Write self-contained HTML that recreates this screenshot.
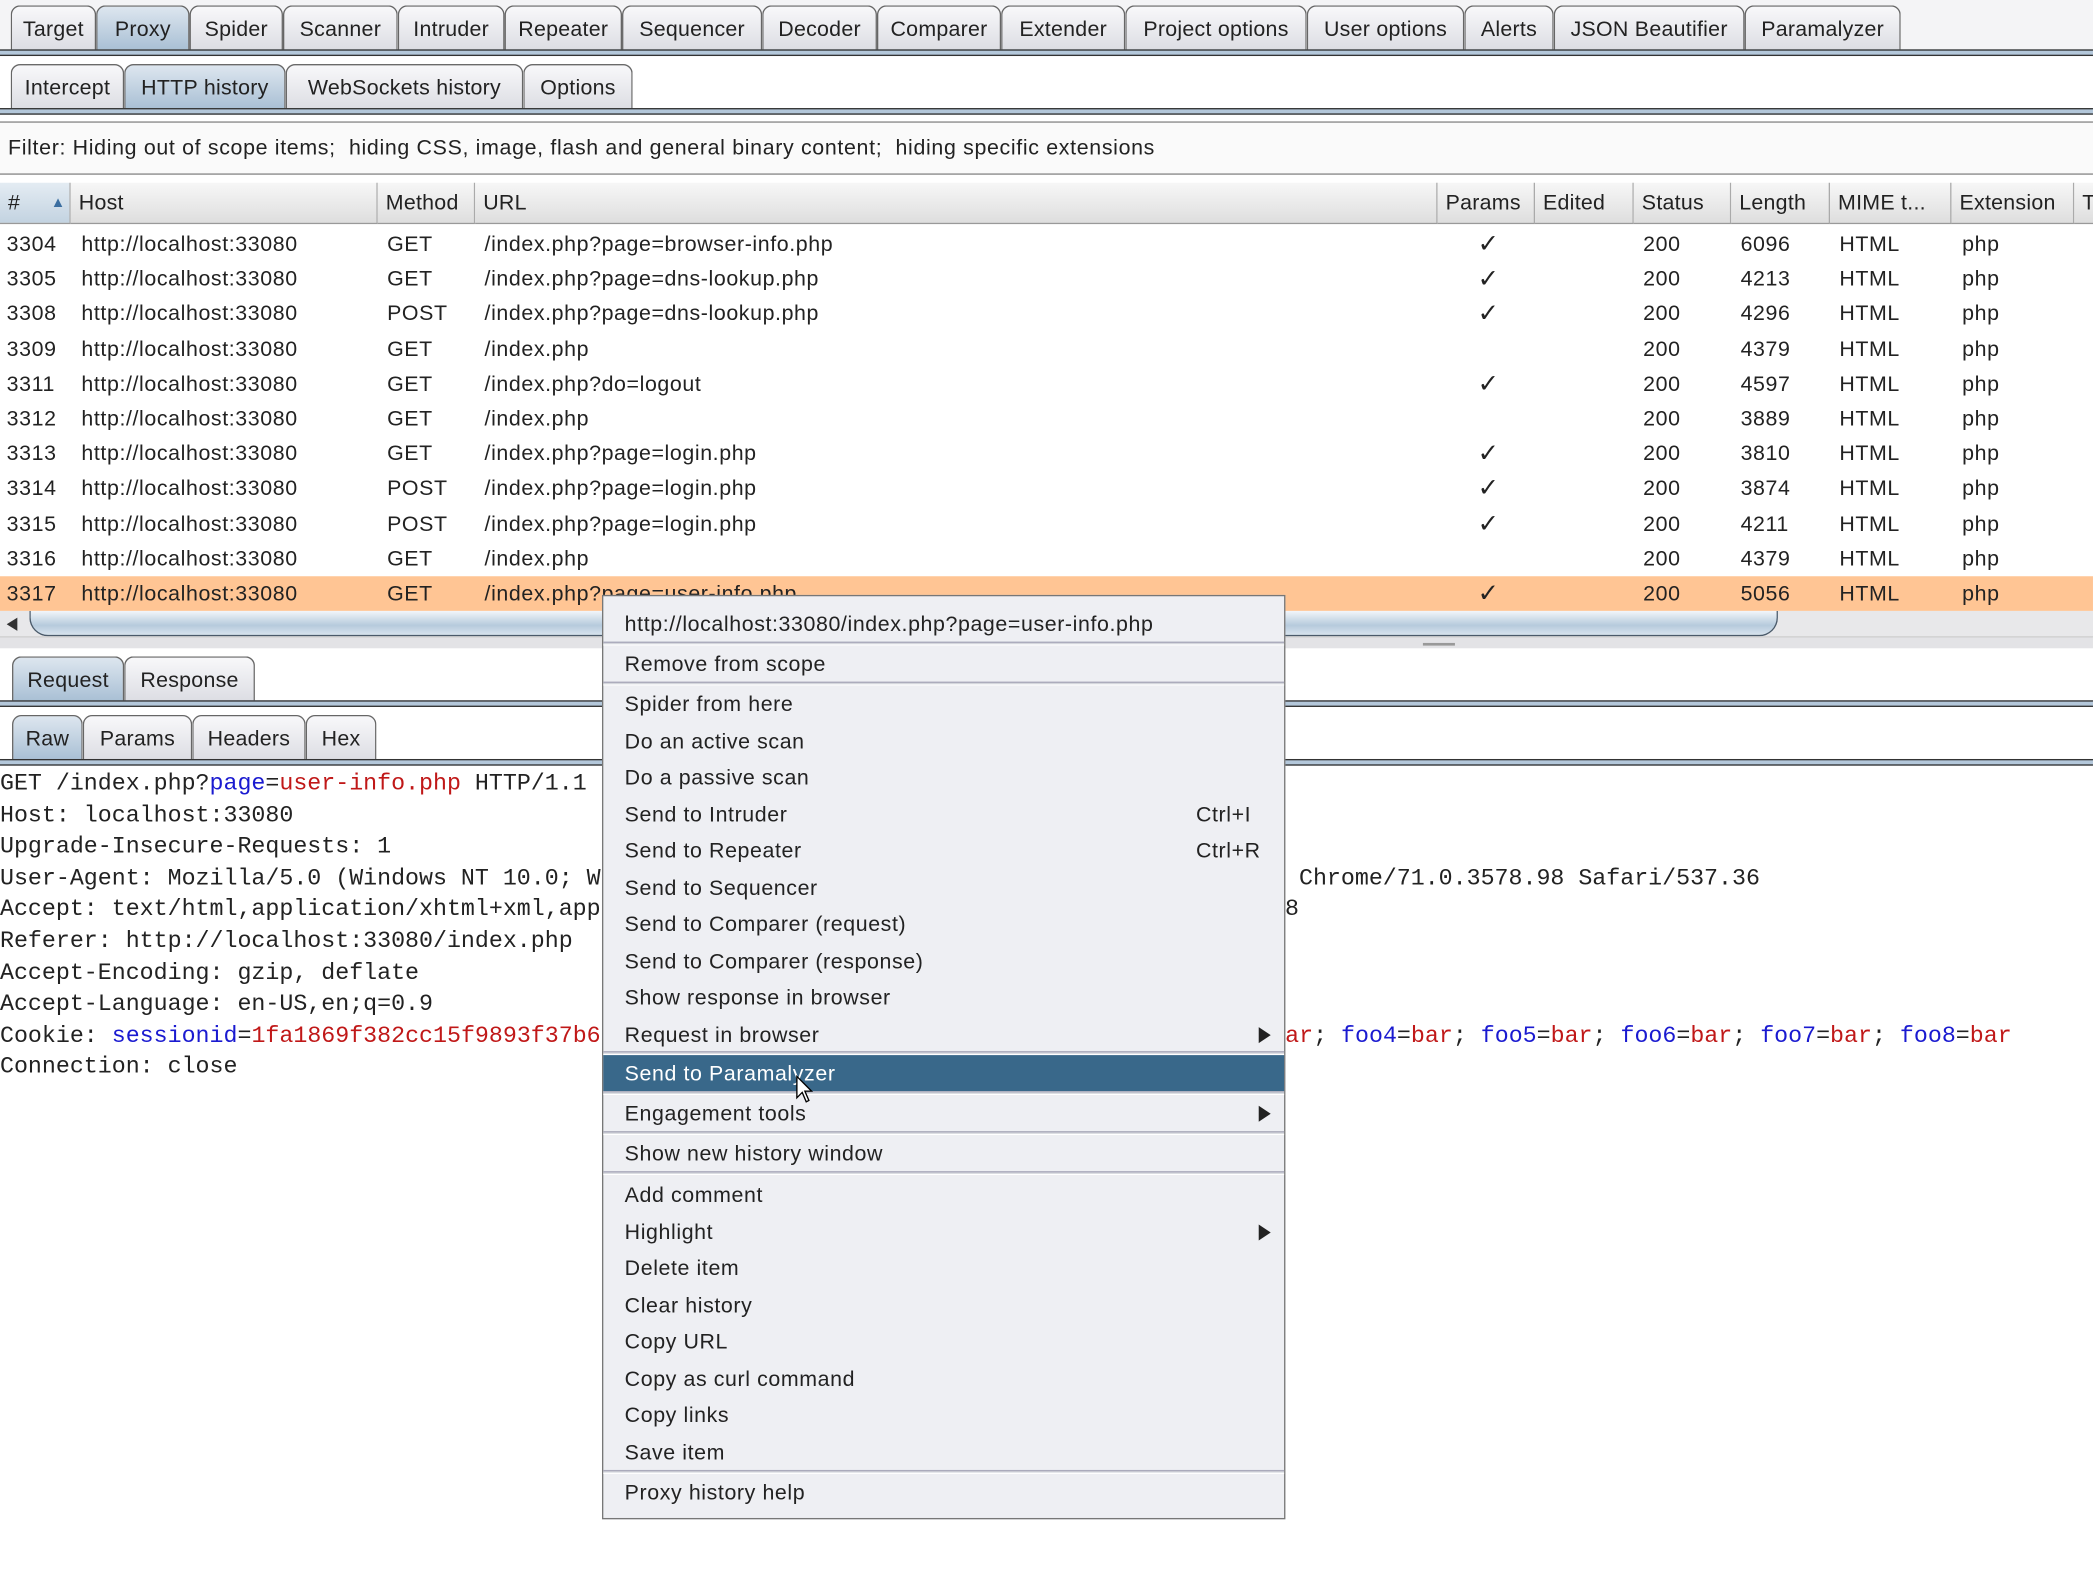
<!DOCTYPE html>
<html><head><meta charset="utf-8"><style>
*{box-sizing:border-box;margin:0;padding:0}
html,body{width:2093px;height:1594px;overflow:hidden;background:#fff}
#w{position:absolute;left:0;top:0;width:1568px;height:1195px;transform:scale(1.3348,1.3339);transform-origin:0 0;font-family:"Liberation Sans",sans-serif;font-size:16px;letter-spacing:0.45px;color:#222;background:#fff}
.abs{position:absolute}
.tab{position:absolute;height:34px;border:1px solid #666;border-bottom:none;border-radius:7px 7px 0 0;background:linear-gradient(#f8f8fa,#dcdde3);text-align:center;line-height:35px;white-space:nowrap;letter-spacing:0.2px}
.tab.sel{background:linear-gradient(#dde6ef,#a8bfd4)}
.bar{position:absolute;left:0;width:1568px;height:5px;border-top:1px solid #333;border-bottom:1px solid #333;background:#b3c7da}
.hd{position:absolute;top:137px;height:31px;border-right:1px solid #aaa;border-bottom:1px solid #999;background:linear-gradient(#f7f7f7,#dedede);line-height:31px;padding-left:6px;white-space:nowrap;overflow:hidden;letter-spacing:0.2px}
.row{position:absolute;left:0;width:1568px;height:26px;line-height:28px;white-space:nowrap}
.row span{position:absolute}
.mono{font-family:"Liberation Mono",monospace;font-size:17.45px;letter-spacing:0;position:absolute;left:0;white-space:pre;line-height:23.6px}
.b{color:#1a1ad0}.r{color:#c01818}
.menu{position:absolute;left:451px;top:446px;width:512px;height:693px;background:#eeeff3;border:1px solid #777}
.mi{position:absolute;left:0;width:510px;height:27px;line-height:29px;padding-left:16px;white-space:nowrap}
.sep{position:absolute;left:0;width:510px;height:3px;border-top:1px solid #aab;border-bottom:1px solid #fff;background:#d4d6dc}
.arr{position:absolute;right:10px;top:8px;width:0;height:0;border-left:9px solid #222;border-top:6px solid transparent;border-bottom:6px solid transparent}
</style></head><body><div id="w">
<div class="abs" style="left:0;top:0;width:1568px;height:40px;background:#f4f4f6"></div>
<div class="tab" style="left:8px;top:4px;width:64px">Target</div>
<div class="tab sel" style="left:72px;top:4px;width:70px">Proxy</div>
<div class="tab" style="left:142px;top:4px;width:70px">Spider</div>
<div class="tab" style="left:212px;top:4px;width:86px">Scanner</div>
<div class="tab" style="left:298px;top:4px;width:80px">Intruder</div>
<div class="tab" style="left:378px;top:4px;width:88px">Repeater</div>
<div class="tab" style="left:466px;top:4px;width:105px">Sequencer</div>
<div class="tab" style="left:571px;top:4px;width:86px">Decoder</div>
<div class="tab" style="left:657px;top:4px;width:93px">Comparer</div>
<div class="tab" style="left:750px;top:4px;width:93px">Extender</div>
<div class="tab" style="left:843px;top:4px;width:136px">Project options</div>
<div class="tab" style="left:979px;top:4px;width:118px">User options</div>
<div class="tab" style="left:1097px;top:4px;width:67px">Alerts</div>
<div class="tab" style="left:1164px;top:4px;width:143px">JSON Beautifier</div>
<div class="tab" style="left:1307px;top:4px;width:117px">Paramalyzer</div>
<div class="bar" style="top:37px"></div>
<div class="tab" style="left:8px;top:48px;width:85px">Intercept</div>
<div class="tab sel" style="left:93px;top:48px;width:121px">HTTP history</div>
<div class="tab" style="left:214px;top:48px;width:178px">WebSockets history</div>
<div class="tab" style="left:392px;top:48px;width:82px">Options</div>
<div class="bar" style="top:81px"></div>
<div class="abs" style="left:0;top:91px;width:1568px;height:40px;border-top:1px solid #888;border-bottom:1px solid #888;background:#fafafa;line-height:40px;padding-left:6px;white-space:pre;letter-spacing:0.5px">Filter: Hiding out of scope items;  hiding CSS, image, flash and general binary content;  hiding specific extensions</div>
<div class="hd" style="left:0;width:53px;background:linear-gradient(#e4ecf3,#c3d3e1)">#<span style="position:absolute;left:38px;top:0;font-size:11px;color:#3b6ea0">▲</span></div>
<div class="hd" style="left:53px;width:230px">Host</div>
<div class="hd" style="left:283px;width:73px">Method</div>
<div class="hd" style="left:356px;width:721px">URL</div>
<div class="hd" style="left:1077px;width:73px">Params</div>
<div class="hd" style="left:1150px;width:74px">Edited</div>
<div class="hd" style="left:1224px;width:73px">Status</div>
<div class="hd" style="left:1297px;width:74px">Length</div>
<div class="hd" style="left:1371px;width:91px">MIME t...</div>
<div class="hd" style="left:1462px;width:92px">Extension</div>
<div class="hd" style="left:1554px;width:20px">T</div>
<div id="rows"></div>
<div class="abs" style="left:0;top:458px;width:1568px;height:20px;background:#e8e8ea;border-bottom:1px solid #ccc"></div>
<div class="abs" style="left:5px;top:463px;width:0;height:0;border-right:8px solid #333;border-top:5px solid transparent;border-bottom:5px solid transparent"></div>
<div class="abs" style="left:22px;top:458px;width:1310px;height:19px;border:1px solid #4a5a6a;border-top:none;border-radius:0 0 14px 14px;background:linear-gradient(#f2f6fa,#b6cadc 60%,#d8e4ee)"></div>
<div class="abs" style="left:0;top:478px;width:1568px;height:8px;background:#e3e3e6"></div>
<div class="abs" style="left:1066px;top:482px;width:24px;height:2px;background:#999"></div>
<div class="tab sel" style="left:9px;top:492px;width:84px">Request</div>
<div class="tab" style="left:93px;top:492px;width:98px">Response</div>
<div class="bar" style="top:525px"></div>
<div class="tab sel" style="left:9px;top:536px;width:53px">Raw</div>
<div class="tab" style="left:62px;top:536px;width:82px">Params</div>
<div class="tab" style="left:144px;top:536px;width:85px">Headers</div>
<div class="tab" style="left:229px;top:536px;width:53px">Hex</div>
<div class="bar" style="top:569px"></div>
<div class="mono" style="top:577px">GET /index.php?<span class="b">page</span>=<span class="r">user-info.php</span> HTTP/1.1
Host: localhost:33080
Upgrade-Insecure-Requests: 1
User-Agent: Mozilla/5.0 (Windows NT 10.0; Win64; x64) AppleWebKit/537.36 (KHTML, like Gecko) Chrome/71.0.3578.98 Safari/537.36
Accept: text/html,application/xhtml+xml,application/xml;q=0.9,image/webp,image/apng,*/*;q=0.8
Referer: http://localhost:33080/index.php
Accept-Encoding: gzip, deflate
Accept-Language: en-US,en;q=0.9
Cookie: <span class="b">sessionid</span>=<span class="r">1fa1869f382cc15f9893f37b69f2e4b7c1d3a6a5c0d1e2</span>; <span class="b">foo1</span>=<span class="r">bar</span>; <span class="b">foo2</span>=<span class="r">bar</span>; <span class="b">foo3</span>=<span class="r">bar</span>; <span class="b">foo4</span>=<span class="r">bar</span>; <span class="b">foo5</span>=<span class="r">bar</span>; <span class="b">foo6</span>=<span class="r">bar</span>; <span class="b">foo7</span>=<span class="r">bar</span>; <span class="b">foo8</span>=<span class="r">bar</span>
Connection: close</div>
<div class="menu">
<div class="mi" style="top:7px">http://localhost:33080/index.php?page=user-info.php</div>
<div class="sep" style="top:34px"></div>
<div class="mi" style="top:37px">Remove from scope</div>
<div class="sep" style="top:64px"></div>
<div class="mi" style="top:67px">Spider from here</div>
<div class="mi" style="top:94.5px">Do an active scan</div>
<div class="mi" style="top:122px">Do a passive scan</div>
<div class="mi" style="top:149.5px">Send to Intruder<span style="position:absolute;left:444px">Ctrl+I</span></div>
<div class="mi" style="top:177px">Send to Repeater<span style="position:absolute;left:444px">Ctrl+R</span></div>
<div class="mi" style="top:204.5px">Send to Sequencer</div>
<div class="mi" style="top:232px">Send to Comparer (request)</div>
<div class="mi" style="top:259.5px">Send to Comparer (response)</div>
<div class="mi" style="top:287px">Show response in browser</div>
<div class="mi" style="top:314.5px">Request in browser<div class="arr"></div></div>
<div class="sep" style="top:341px"></div>
<div class="mi" style="top:344px;height:27px;background:#39688a;color:#fff">Send to Paramalyzer</div>
<div class="sep" style="top:371px"></div>
<div class="mi" style="top:374px">Engagement tools<div class="arr"></div></div>
<div class="sep" style="top:401px"></div>
<div class="mi" style="top:404px">Show new history window</div>
<div class="sep" style="top:431px"></div>
<div class="mi" style="top:435px">Add comment</div>
<div class="mi" style="top:462.5px">Highlight<div class="arr"></div></div>
<div class="mi" style="top:490px">Delete item</div>
<div class="mi" style="top:517.5px">Clear history</div>
<div class="mi" style="top:545px">Copy URL</div>
<div class="mi" style="top:572.5px">Copy as curl command</div>
<div class="mi" style="top:600px">Copy links</div>
<div class="mi" style="top:627.5px">Save item</div>
<div class="sep" style="top:655px"></div>
<div class="mi" style="top:658px">Proxy history help</div>
</div>
<svg class="abs" style="left:596px;top:806px" width="14" height="22" viewBox="0 0 14 22"><path d="M1 1 L1 17 L5 13 L8 20 L10 19 L7 12 L12 12 Z" fill="#fff" stroke="#000" stroke-width="1"/></svg>
</div>
<script>
var d=[["3304","GET","/index.php?page=browser-info.php",1,"6096"],["3305","GET","/index.php?page=dns-lookup.php",1,"4213"],["3308","POST","/index.php?page=dns-lookup.php",1,"4296"],["3309","GET","/index.php",0,"4379"],["3311","GET","/index.php?do=logout",1,"4597"],["3312","GET","/index.php",0,"3889"],["3313","GET","/index.php?page=login.php",1,"3810"],["3314","POST","/index.php?page=login.php",1,"3874"],["3315","POST","/index.php?page=login.php",1,"4211"],["3316","GET","/index.php",0,"4379"],["3317","GET","/index.php?page=user-info.php",1,"5056"]];
var h="";d.forEach(function(r,i){var t=170+i*26.2;h+='<div class="row" style="top:'+t+'px;'+(i==10?'background:#ffc594':'')+'"><span style="left:5px">'+r[0]+'</span><span style="left:61px">http://localhost:33080</span><span style="left:290px">'+r[1]+'</span><span style="left:363px">'+r[2]+'</span>'+(r[3]?'<span style="left:1107px;font-size:19px">✓</span>':'')+'<span style="left:1231px">200</span><span style="left:1304px">'+r[4]+'</span><span style="left:1378px">HTML</span><span style="left:1470px">php</span></div>';});
document.getElementById("rows").innerHTML=h;
</script>
</body></html>
